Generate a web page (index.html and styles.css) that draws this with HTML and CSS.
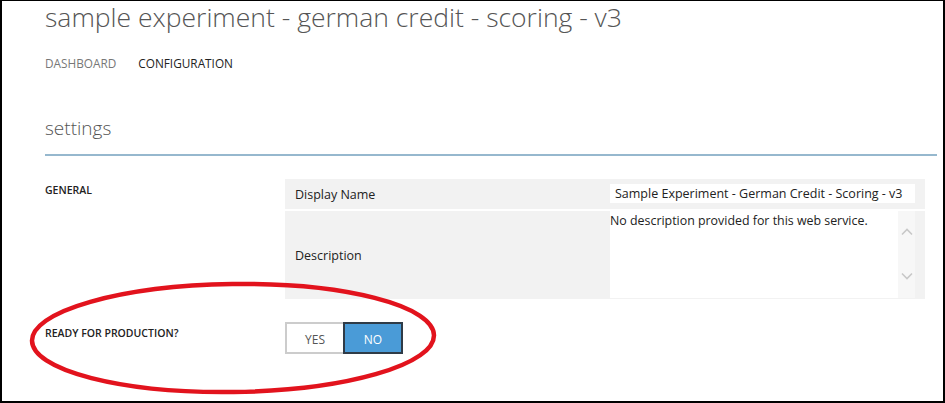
FILE: index.html
```html
<!DOCTYPE html>
<html lang="en">
<head>
<meta charset="utf-8">
<title>sample experiment - german credit - scoring - v3</title>
<link rel="stylesheet" href="styles.css">
</head>
<body>
<div class="frame">
  <header class="head">
    <h1 class="title">sample experiment - german credit - scoring - v3</h1>
    <nav class="tabs">
      <a class="tab">DASHBOARD</a>
      <a class="tab active">CONFIGURATION</a>
    </nav>
  </header>

  <section class="settings">
    <h2 class="section-title">settings</h2>
    <div class="rule"></div>

    <div class="group">
      <div class="group-label">GENERAL</div>
      <div class="props">
        <div class="prop prop-name">
          <div class="prop-label">Display Name</div>
          <div class="prop-value">
            <div class="input">Sample Experiment - German Credit - Scoring - v3</div>
          </div>
        </div>
        <div class="prop prop-desc">
          <div class="prop-label">Description</div>
          <div class="prop-value">
            <div class="textarea">
              <div class="textarea-text">No description provided for this web service.</div>
              <div class="scrollbar">
                <svg class="chev" width="12" height="8" viewBox="0 0 12 8"><polyline points="1,6.5 6,1.5 11,6.5" fill="none" stroke="#c8c8c8" stroke-width="1.6"/></svg>
                <svg class="chev" width="12" height="8" viewBox="0 0 12 8"><polyline points="1,1.5 6,6.5 11,1.5" fill="none" stroke="#c8c8c8" stroke-width="1.6"/></svg>
              </div>
            </div>
          </div>
        </div>
      </div>
    </div>

    <div class="group group-ready">
      <div class="group-label">READY FOR PRODUCTION?</div>
      <div class="toggle">
        <span class="opt opt-yes">YES</span>
        <span class="opt opt-no">NO</span>
      </div>
    </div>
  </section>

  <svg class="annotation" width="945" height="403" viewBox="0 0 945 403">
    <ellipse cx="233" cy="338" rx="201" ry="54" fill="none" stroke="#e2131d" stroke-width="4.5" transform="rotate(-0.8 233 338)"/>
  </svg>
</div>
</body>
</html>
```

FILE: styles.css
```css
* { box-sizing: border-box; }

html, body {
  margin: 0;
  padding: 0;
  background: #fff;
}

body {
  font-family: "Open Sans", "Noto Sans", "Liberation Sans", sans-serif;
  color: #222;
}

.frame {
  position: relative;
  width: 945px;
  height: 403px;
  border: 2px solid #000;
  border-top-width: 1px;
  overflow: hidden;
  background: #fff;
}

.head {
  padding-left: 43px;
}

.title {
  margin: 0;
  padding-top: 1px;
  font-size: 26.5px;
  line-height: 30px;
  font-weight: 300;
  color: #555;
  white-space: nowrap;
}

.tabs {
  display: flex;
  gap: 22px;
  margin-top: 23px;
}

.tab {
  font-size: 11.8px;
  line-height: 16px;
  color: #777;
  text-decoration: none;
}

.tab.active {
  color: #222;
}

.settings {
  padding: 0 6px 0 43px;
}

.section-title {
  margin: 0;
  padding-top: 45px;
  font-size: 19px;
  line-height: 24px;
  font-weight: 300;
  color: #555;
}

.rule {
  margin-top: 14px;
  height: 2px;
  background: #96b8ce;
}

.group {
  display: grid;
  grid-template-columns: 240px 640px;
  margin-top: 23px;
}

.group-label {
  font-size: 10.5px;
  line-height: 15px;
  font-weight: 600;
  color: #222;
  padding-top: 4px;
}

.props {
  display: flex;
  flex-direction: column;
  gap: 2px;
}

.prop {
  display: grid;
  grid-template-columns: 325px 1fr;
  background: #f2f2f2;
}

.prop-name {
  height: 30px;
}

.prop-desc {
  height: 88px;
}

.prop-label {
  display: flex;
  align-items: center;
  padding-left: 10px;
  font-size: 12.5px;
  color: #222;
}

.prop-value {
  padding-right: 10px;
}

.prop-name .prop-value {
  padding-top: 5px;
}

.input {
  height: 19px;
  background: #fff;
  font-size: 12.5px;
  line-height: 19px;
  padding-left: 5px;
  color: #222;
  white-space: nowrap;
  overflow: hidden;
}

.textarea {
  display: flex;
  height: 87px;
  background: #fff;
}

.textarea-text {
  flex: 1;
  font-size: 12.4px;
  line-height: 16px;
  padding-top: 2px;
  color: #222;
}

.scrollbar {
  width: 17px;
  background: #f7f7f7;
  display: flex;
  flex-direction: column;
  align-items: center;
  justify-content: space-between;
  padding: 17px 0 18px;
}

.chev {
  display: block;
}

.group-ready {
  margin-top: 23px;
}

.toggle {
  display: flex;
  width: 118px;
  height: 32px;
}

.opt {
  display: flex;
  align-items: center;
  justify-content: center;
  font-size: 12px;
  padding-top: 2px;
}

.opt-yes {
  width: 58px;
  border: 2px solid #cccccc;
  border-right: none;
  color: #555;
  background: #fff;
}

.opt-no {
  width: 60px;
  border: 2px solid #2f3b47;
  background: #4a9bd7;
  color: #fff;
}

.annotation {
  position: absolute;
  left: -2px;
  top: -1px;
  pointer-events: none;
}
```
